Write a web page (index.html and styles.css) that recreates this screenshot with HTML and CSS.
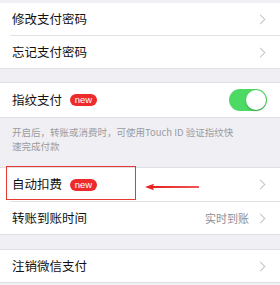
FILE: index.html
```
<!DOCTYPE html>
<html>
<head>
<meta charset="utf-8">
<link rel="stylesheet" href="styles.css">
</head>
<body>
<div class="page">
  <div class="group first">
    <div class="row"><span class="label">修改支付密码</span><span class="chev"></span></div>
    <div class="row"><span class="label">忘记支付密码</span><span class="chev"></span></div>
  </div>
  <div class="group g2">
    <div class="row tall"><span class="label">指纹支付</span><span class="badge">new</span><span class="toggle"><span class="knob"></span></span></div>
  </div>
  <div class="desc">开启后，转账或消费时，可使用Touch ID 验证指纹快<br>速完成付款</div>
  <div class="group g3">
    <div class="row annotated"><span class="label">自动扣费</span><span class="badge">new</span><span class="chev"></span>
      <span class="redbox"></span>
      <svg class="arrow" width="56" height="8" viewBox="0 0 56 8"><path d="M0 4 L9 0.8 L8 3 L54 3.3 L54 4.7 L8 5 L9 7.2 Z" fill="#e8231f"/></svg>
    </div>
    <div class="row"><span class="label">转账到账时间</span><span class="value">实时到账</span><span class="chev"></span></div>
  </div>
  <div class="group g4">
    <div class="row"><span class="label">注销微信支付</span><span class="chev"></span></div>
  </div>
</div>
</body>
</html>
```
FILE: styles.css
```
html, body {
  margin: 0;
  padding: 0;
  background: #efeff4;
  font-family: "Noto Sans CJK SC", "Noto Sans", sans-serif;
  color: #111;
}
.page {
  width: 280px;
  height: 285px;
  overflow: hidden;
  padding-top: 3px;
  box-sizing: border-box;
}
.group {
  background: #fff;
  border-top: 1px solid #e0e0e4;
  border-bottom: 1px solid #e0e0e4;
}
.group.first { border-top: none; }
.g2 { margin-top: 13px; }
.g4 { margin-top: 14px; }
.row {
  position: relative;
  display: flex;
  align-items: center;
  height: 32px;
  padding: 0 14px 0 12px;
}
.row + .row { margin-top: 1px; }
.row + .row::before {
  content: "";
  position: absolute;
  left: 10px;
  right: 0;
  top: -1px;
  height: 1px;
  background: #e3e3e6;
}
.row.tall { height: 34px; }
.row.annotated { height: 33px; }
.label {
  font-size: 12.5px;
  line-height: 1;
}
.badge {
  margin-left: 8px;
  background: #ee2b2b;
  color: #fff;
  font-family: "Liberation Sans", Arial, sans-serif;
  font-size: 9.5px;
  line-height: 12px;
  height: 12px;
  width: 27px;
  text-align: center;
  border-radius: 6px;
}
.value {
  margin-left: auto;
  font-size: 11px;
  color: #8e8e93;
  margin-right: 8px;
}
.chev {
  margin-left: auto;
  width: 6px;
  height: 6px;
  border-top: 1.2px solid #c4c4c8;
  border-right: 1.2px solid #c4c4c8;
  transform: rotate(45deg);
  margin-right: 2px;
}
.value + .chev { margin-left: 0; }
.toggle {
  margin-left: auto;
  margin-right: -1px;
  width: 38px;
  height: 22px;
  border-radius: 11px;
  background: #4cd964;
  position: relative;
}
.knob {
  position: absolute;
  right: 1px;
  top: 1px;
  width: 20px;
  height: 20px;
  border-radius: 50%;
  background: #fff;
  box-shadow: 0 1px 2px rgba(0,0,0,0.25);
}
.desc {
  font-size: 9.5px;
  line-height: 14px;
  color: #9b9b9f;
  padding: 7px 12px 14px;
}
.redbox {
  position: absolute;
  left: 6px;
  top: -2px;
  width: 130px;
  height: 34px;
  border: 1.5px solid #e53935;
  box-sizing: border-box;
}
.arrow {
  position: absolute;
  left: 145px;
  top: 15px;
}
```
